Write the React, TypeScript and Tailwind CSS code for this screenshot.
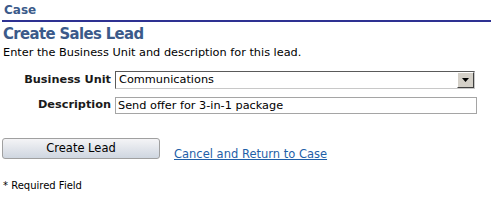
import React from "react";

export default function App() {
  return (
    <div className="w-[491px] h-[200px] bg-white overflow-hidden" style={{ fontFamily: '"DejaVu Sans", Verdana, sans-serif' }}>
      <div className="pt-[3px] pl-[4px] text-[12px] font-bold leading-[15px] text-[#3b5a8a]">Case</div>
      <div className="ml-[2px] mt-[2px] h-[2px] bg-[#2e3192]" />
      <div className="pl-[3px] mt-[1px] text-[16.5px] font-bold leading-[21px] text-[#3b5a8a] tracking-[-0.6px]" style={{ fontFamily: '"DejaVu Sans Condensed", "DejaVu Sans", sans-serif' }}>Create Sales Lead</div>
      <div className="pl-[3px] mt-[2px] text-[11.3px] leading-[13px] text-black">Enter the Business Unit and description for this lead.</div>
      <div className="mt-[12px] flex flex-col gap-[8px]">
        <div className="flex items-center">
          <div className="w-[115px] pr-[4px] text-right text-[11.3px] font-bold text-[#1a1a1a]">Business Unit</div>
          <div className="w-[360px] h-[18px] border border-[#5a5a5a] border-r-[#c8c8c8] border-b-[#c8c8c8] flex items-center justify-between bg-white">
            <span className="pl-[3px] text-[11.3px] text-black leading-[14px]">Communications</span>
            <div className="w-[17px] h-[16px] bg-[#d4d0c8] border border-t-white border-l-white border-r-[#404040] border-b-[#404040] flex items-center justify-center">
              <svg width="7" height="4" viewBox="0 0 7 4"><path d="M0 0H7L3.5 4Z" fill="#000" /></svg>
            </div>
          </div>
        </div>
        <div className="flex items-center">
          <div className="w-[115px] pr-[4px] text-right text-[11.3px] font-bold text-[#1a1a1a]">Description</div>
          <div className="w-[362px] h-[17px] border border-[#a5a5a5] flex items-center bg-white">
            <span className="pl-[2px] text-[11.3px] text-black leading-[14px]">Send offer for 3-in-1 package</span>
          </div>
        </div>
      </div>
      <div className="mt-[24px] flex items-end">
        <div className="ml-[2px] w-[158px] h-[21px] rounded-[3px] border border-[#a0a0a0] bg-gradient-to-b from-[#f4f4f6] to-[#cfd6e0] flex items-center justify-center text-[11.5px] text-black">
          Create Lead
        </div>
        <a className="ml-[14px] mb-[-4px] text-[11.5px] text-[#1f5fa8] underline">Cancel and Return to Case</a>
      </div>
      <div className="mt-[19px] pl-[3px] text-[10px] text-black">* Required Field</div>
    </div>
  );
}
